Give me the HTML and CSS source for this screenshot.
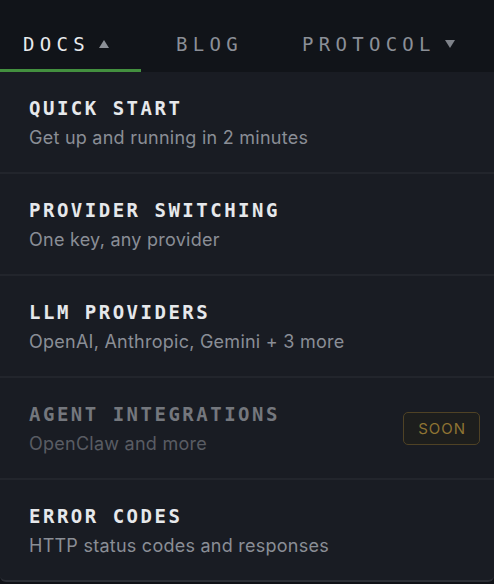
FILE: index.html
```html
<!DOCTYPE html>
<html lang="en">
<head>
    <meta charset="UTF-8">
    <meta name="viewport" content="width=device-width, initial-scale=1.0">
    <title>Docs Menu</title>
    <link rel="stylesheet" href="styles.css">
</head>
<body>
    <nav class="tabs">
        <a class="tab active" href="#">DOCS
            <svg class="caret" width="10" height="8" viewBox="0 0 10 8"><polygon points="5,0 10,8 0,8"/></svg>
        </a>
        <a class="tab" href="#">BLOG</a>
        <a class="tab" href="#">PROTOCOL
            <svg class="caret" width="10" height="8" viewBox="0 0 10 8"><polygon points="0,0 10,0 5,8"/></svg>
        </a>
    </nav>

    <div class="menu">
        <a class="menu-item" href="#">
            <div class="item-text">
                <div class="item-title">QUICK START</div>
                <div class="item-desc">Get up and running in 2 minutes</div>
            </div>
        </a>
        <a class="menu-item" href="#">
            <div class="item-text">
                <div class="item-title">PROVIDER SWITCHING</div>
                <div class="item-desc">One key, any provider</div>
            </div>
        </a>
        <a class="menu-item" href="#">
            <div class="item-text">
                <div class="item-title">LLM PROVIDERS</div>
                <div class="item-desc">OpenAI, Anthropic, Gemini + 3 more</div>
            </div>
        </a>
        <div class="menu-item disabled">
            <div class="item-text">
                <div class="item-title">AGENT INTEGRATIONS</div>
                <div class="item-desc">OpenClaw and more</div>
            </div>
            <span class="badge">SOON</span>
        </div>
        <a class="menu-item" href="#">
            <div class="item-text">
                <div class="item-title">ERROR CODES</div>
                <div class="item-desc">HTTP status codes and responses</div>
            </div>
        </a>
    </div>
</body>
</html>
```
FILE: styles.css
```css
body {
    margin: 0;
    padding: 0;
    background-color: #101217;
    font-family: Inter, "Noto Sans", sans-serif;
}

a {
    text-decoration: none;
    color: inherit;
}

.tabs {
    display: flex;
    gap: 12px;
    height: 72px;
    background-color: #111419;
}

.tab {
    display: flex;
    align-items: center;
    padding: 18px 24px 0 23px;
    font-family: "DejaVu Sans Mono", monospace;
    font-size: 19px;
    letter-spacing: 5.3px;
    color: #8b8f97;
    border-bottom: 3px solid transparent;
}

.tab.active {
    color: #e8eaed;
    border-bottom-color: #43903f;
    padding-right: 32px;
}

.caret {
    margin-left: 9px;
    fill: #7f838a;
}

.tab.active .caret {
    fill: #8c9097;
}

.menu {
    background-color: #191c23;
    border-bottom: 2px solid #2c2f36;
    border-radius: 0 0 6px 6px;
}

.menu-item {
    box-sizing: border-box;
    display: flex;
    align-items: center;
    height: 102px;
    padding: 3px 14px 0 29px;
    border-bottom: 2px solid #22252c;
}

.menu-item:last-child {
    height: 100px;
    border-bottom: none;
}

.item-text {
    flex: 1;
}

.item-title {
    font-family: "DejaVu Sans Mono", monospace;
    font-weight: bold;
    font-size: 19px;
    letter-spacing: 2.5px;
    color: #e6e8eb;
    line-height: 24px;
}

.item-desc {
    margin-top: 5px;
    font-size: 18px;
    letter-spacing: 0.25px;
    color: #8a8e96;
    line-height: 26px;
}

.disabled .item-title {
    color: #74777d;
}

.disabled .item-desc {
    color: #595c63;
}

.badge {
    margin-bottom: 3px;
    padding: 6px 13px 6px 14px;
    font-size: 15px;
    letter-spacing: 1px;
    color: #8f7433;
    background-color: #1d1e1d;
    border: 1px solid #4f4225;
    border-radius: 5px;
}
```
